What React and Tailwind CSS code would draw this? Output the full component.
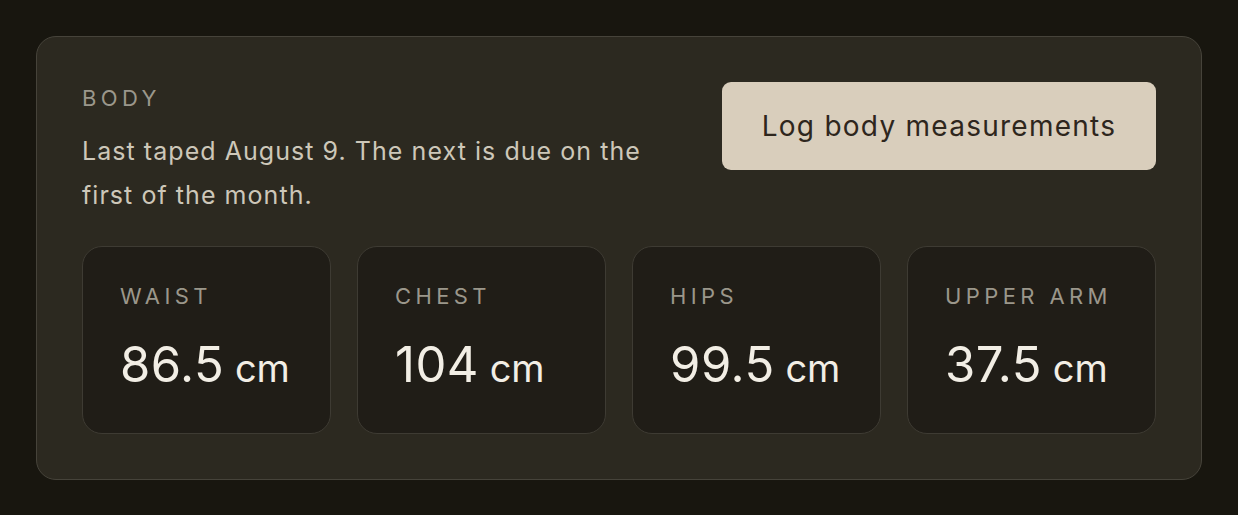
const METRICS = [
  { label: "Waist", value: "86.5" },
  { label: "Chest", value: "104" },
  { label: "Hips", value: "99.5" },
  { label: "Upper arm", value: "37.5" },
];

export default function App() {
  return (
    <div
      className="min-h-screen bg-[#18160f] p-[36px]"
      style={{ fontFamily: "Inter, 'Noto Sans', sans-serif" }}
    >
      <div className="rounded-[20px] border border-[#46433a] bg-[#2c2920] p-[45px]">
        {/* HEADER */}
        <div className="flex items-start justify-between gap-10">
          <div className="max-w-[600px]">
            <div className="text-[22px] leading-[33px] uppercase tracking-[0.2em] text-[#9b978b]">
              Body
            </div>
            <p className="mt-[14px] text-[25px] leading-[44px] tracking-[0.042em] text-[#cdc7b9]">
              Last taped August 9. The next is due on the first of the month.
            </p>
          </div>
          <button className="h-[88px] w-[434px] shrink-0 rounded-[9px] bg-[#d9cebc] text-[28px] tracking-[0.045em] text-[#2e261d]">
            Log body measurements
          </button>
        </div>

        {/* METRICS */}
        <div className="mt-[29px] grid grid-cols-4 gap-[26px]">
          {METRICS.map((m) => (
            <div
              key={m.label}
              className="rounded-[20px] border border-[#3e3b33] bg-[#201d17] px-[37px] pt-[33px] pb-[41px]"
            >
              <div className="text-[22px] leading-[33px] uppercase tracking-[0.2em] text-[#9b978b]">
                {m.label}
              </div>
              <div className="mt-[28px] whitespace-nowrap text-[49px] leading-[48px] tracking-[0.01em] text-[#f2eee5]">
                {m.value}
                <span className="text-[38px] tracking-normal"> cm</span>
              </div>
            </div>
          ))}
        </div>
      </div>
    </div>
  );
}
